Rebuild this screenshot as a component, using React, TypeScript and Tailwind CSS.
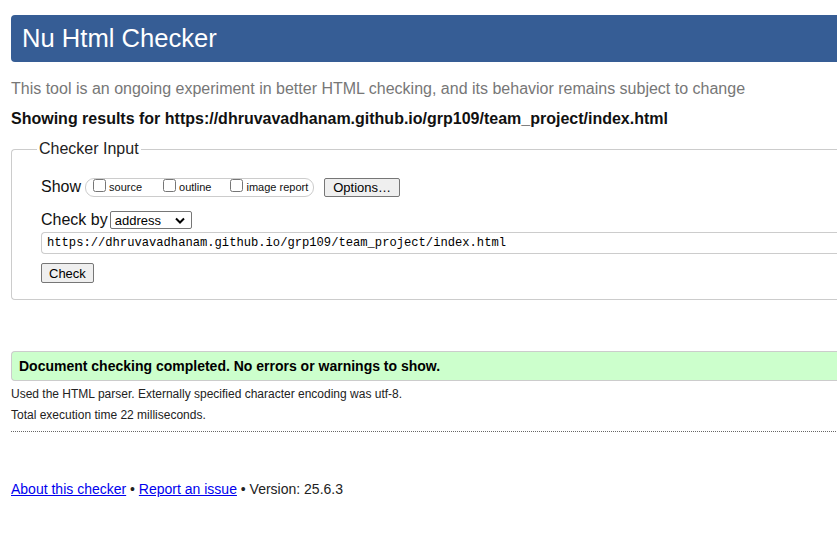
import React from "react";

const url = "https://dhruvavadhanam.github.io/grp109/team_project/index.html";

function Check({ label, className }: { label: string; className?: string }) {
  return (
    <label className={"flex items-center " + (className ?? "")}>
      <input
        type="checkbox"
        className="m-0 mb-[4px] mr-[3px] h-[13px] w-[13px]"
      />
      <span className="text-[11px] leading-[13px]">{label}</span>
    </label>
  );
}

export default function App() {
  return (
    <div className="h-[538px] w-full overflow-hidden bg-white font-['Liberation_Sans',Arial,sans-serif] text-[#111]">
      <div className="w-[900px] pl-[11px] pt-[15px]">
        <h1 className="flex h-[47px] items-center rounded-l-[4px] bg-[#365d95] pl-[11px] text-[25.6px] font-normal text-white">
          Nu Html Checker
        </h1>

        <p className="mt-[18px] text-[16px] leading-[18px] text-[#777]">
          This tool is an ongoing experiment in better HTML checking, and its behavior remains subject to change
        </p>
        <p className="mt-[12px] text-[16px] font-bold leading-[18px] text-[#111]">
          Showing results for {url}
        </p>

        <fieldset className="mt-[12px] rounded-l-[4px] border border-r-0 border-[#ccc] pb-[16px] pl-[25px]">
          <legend className="px-[2px] text-[16px] leading-[18px] text-[#222]">Checker Input</legend>
          <div className="pl-[4px] pt-[19px]">
            <div className="flex h-[20px] items-center">
              <span className="text-[16px] leading-[18px]">Show</span>
              <div className="ml-[4px] flex h-[19px] items-center rounded-[9px] border border-[#ccc] pr-[5px]">
                <Check label="source" className="ml-[7px]" />
                <Check label="outline" className="ml-[21px]" />
                <Check label="image report" className="ml-[19px]" />
              </div>
              <button className="ml-[10px] h-[19px] rounded-[2px] border border-[#767676] bg-[#efefef] px-[8px] text-[13px] leading-[15px] text-black">
                Options…
              </button>
            </div>

            <div className="mt-[13px] flex h-[20px] items-center">
              <span className="text-[16px] leading-[18px]">Check by</span>
              <div className="ml-[2px] flex h-[18px] w-[82px] items-center justify-between rounded-[2px] border border-[#767676] pl-[4px] pr-[6px] text-[13px] leading-[15px] text-black">
                <span>address</span>
                <svg width="10" height="7" viewBox="0 0 10 7">
                  <path d="M1 1.5 L5 5.5 L9 1.5" fill="none" stroke="#000" strokeWidth="2" />
                </svg>
              </div>
            </div>

            <input
              readOnly
              defaultValue={url}
              className="mt-[2px] block h-[22px] w-[900px] rounded-l-[4px] border border-r-0 border-[#ccc] pl-[5px] font-['Liberation_Mono',monospace] text-[12.15px] text-black outline-none"
            />

            <button className="mt-[9px] block h-[20px] rounded-[2px] border border-[#767676] bg-[#efefef] px-[7px] text-[13px] leading-[15px] text-black">
              Check
            </button>
          </div>
        </fieldset>

        <div className="mt-[51px] flex h-[30px] items-center rounded-l-[4px] border border-r-0 border-[#ccc] bg-[#ccffcc] pl-[7px] text-[14px] font-bold text-black">
          Document checking completed. No errors or warnings to show.
        </div>

        <p className="mt-[6px] text-[12px] leading-[14px] text-[#222]">
          Used the HTML parser. Externally specified character encoding was utf-8.
        </p>
        <p className="mt-[7px] text-[12px] leading-[14px] text-[#222]">
          Total execution time 22 milliseconds.
        </p>
        <div className="mt-[9px] border-t border-dotted border-[#666]" />

        <p className="mt-[49px] text-[14px] leading-[16px] text-[#222]">
          <a href="#" className="text-[#0000ee] underline">About this checker</a>
          {" • "}
          <a href="#" className="text-[#0000ee] underline">Report an issue</a>
          {" • Version: 25.6.3"}
        </p>
      </div>
    </div>
  );
}
